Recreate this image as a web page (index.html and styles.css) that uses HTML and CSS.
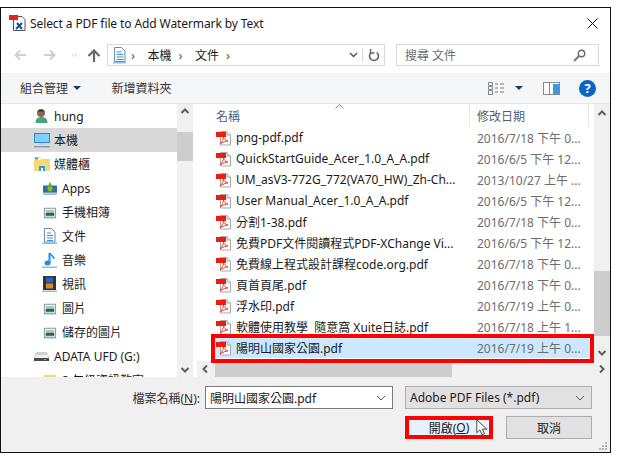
FILE: index.html
```html
<!DOCTYPE html>
<html lang="zh-Hant">
<head>
<meta charset="utf-8">
<title>Select a PDF file</title>
<link rel="stylesheet" href="styles.css">
</head>
<body>
<svg class="defs" width="0" height="0" aria-hidden="true">
  <symbol id="pdf" viewBox="0 0 16 16">
    <path d="M4.500 1.500h6.500l3.500 3.500v10h-10z" fill="#fff" stroke="#a8a8a8"/>
    <path d="M11 1.500v3.500h3.500" fill="#e8e8e8" stroke="#a8a8a8"/>
    <rect x="0" y="2" width="10" height="5" fill="#ee1c0e"/>
    <path d="M4 14c2-2 3.500-5 3.500-7 .5 2 2 3.500 4.500 4-2 0-5 1-8 3z" fill="none" stroke="#e8392c" stroke-width="1"/>
  </symbol>
  <symbol id="screen" viewBox="0 0 16 16">
    <path d="M1.500 15h14l-1-1.500h-12z" fill="#7cc4ee"/>
    <rect x="2.500" y="4" width="12" height="9.500" fill="#f4f8fb" stroke="#7f94a6"/>
    <rect x="4" y="6" width="9" height="6" fill="#9fc6a8"/>
    <rect x="4" y="9" width="9" height="3" fill="#3c5a4c"/>
  </symbol>
</svg>
<div class="window">
  <div class="titlebar">
    <svg class="title-icon" width="17" height="17" viewBox="0 0 17 17"><path d="M4.500 1.500h8.500l3 3v11H4.500z" fill="#fff" stroke="#555"/><rect x="0" y="0" width="9" height="5" fill="#e8201a"/><path d="M7 14l6-6M8 8l5 6" stroke="#1b4f9a" stroke-width="2"/></svg>
    <span class="title-text">Select a PDF file to Add Watermark by Text</span>
    <svg class="close" width="11" height="11" viewBox="0 0 11 11"><path d="M.500.500l10 10M10.500.500l-10 10" stroke="#111" fill="none"/></svg>
  </div>

  <div class="navrow">
    <svg class="nav-arrows" width="92" height="16" viewBox="0 0 92 16">
      <path d="M14 8H3.500M8 3.500L3.500 8 8 12.500" fill="none" stroke="#cfcfcf" stroke-width="2"/>
      <path d="M32 8h10.500M38 3.500L42.500 8 38 12.500" fill="none" stroke="#cfcfcf" stroke-width="2"/>
      <path d="M60 7l2.500 2.500L65 7" fill="none" stroke="#cfcfcf"/>
      <path d="M82 15V4M76.500 9L82 3.500 87.500 9" fill="none" stroke="#666" stroke-width="2.200"/>
    </svg>
    <div class="address">
      <svg class="addr-icon" width="13" height="17" viewBox="0 0 13 17"><path d="M1.500.500h7l3.500 3.500v10.500H1.500z" fill="#fff" stroke="#6f8aa3"/><path d="M3.500 5h5M3.500 7.500h7M3.500 10h7M3.500 12.500h7" stroke="#3d8fd8"/><path d="M0 15h13v1.500H0z" fill="#7cc4ee"/></svg>
      <span class="chev">›</span>
      <span class="crumb">本機</span>
      <span class="chev">›</span>
      <span class="crumb">文件</span>
      <span class="chev">›</span>
      <svg class="addr-drop" width="9" height="6" viewBox="0 0 9 6"><path d="M1 1l3.500 3.500L8 1" fill="none" stroke="#555" stroke-width="1.500"/></svg>
      <svg class="refresh" width="12" height="14" viewBox="0 0 12 14"><path d="M3.300 4.300a4.500 4.500 0 1 0 5.400 0" fill="none" stroke="#666" stroke-width="1.600"/><path d="M2.500 1v4h4" fill="none" stroke="#666" stroke-width="1.400"/></svg>
    </div>
    <div class="search">
      <span class="search-text">搜尋 文件</span>
      <svg width="13" height="13" viewBox="0 0 13 13"><circle cx="8.500" cy="4.500" r="3.200" fill="none" stroke="#666" stroke-width="1.400"/><path d="M6 7l-5 5" stroke="#777" stroke-width="2"/></svg>
    </div>
  </div>

  <div class="toolbar">
    <span class="tool-org">組合管理</span>
    <span class="caret"></span>
    <span class="tool-new">新增資料夾</span>
    <svg class="view-icon" width="17" height="13" viewBox="0 0 17 13"><path d="M.500.500h4v3h-4zM.500 4.500h4v3h-4zM.500 8.500h4v4h-4z" fill="none" stroke="#888"/><path d="M7 2h3M12 2h4M7 6h3M12 6h4M7 10h3M12 10h4" stroke="#777"/></svg>
    <span class="caret caret-view"></span>
    <svg class="pane-icon" width="17" height="13" viewBox="0 0 17 13"><rect x=".5" y=".5" width="16" height="12" fill="#fff" stroke="#8a8a8a"/><rect x="6" y="1" width="1" height="11" fill="#8a8a8a"/><rect x="10" y="2" width="6" height="10" fill="#3e96e0"/></svg>
    <span class="help">?</span>
  </div>

  <div class="panes">
    <div class="nav-pane">
      <div class="tree">
        <div class="node">
          <svg class="ti" width="14" height="16" viewBox="0 0 14 16"><path d="M1 15c0-4 2-6 6-6s6 2 6 6z" fill="#4aa27c"/><circle cx="6.500" cy="5" r="4" fill="#8a6a52"/><path d="M3 3.500a4 3.500 0 0 1 7 0z" fill="#2f2a28"/></svg>
          <span>hung</span>
        </div>
        <div class="node node-sel">
          <svg class="ti-pc" width="16" height="16" viewBox="0 0 16 16"><rect x="0" y="1" width="16" height="10" fill="#2f86c9"/><rect x="1" y="2" width="14" height="8" fill="#7fd0fa"/><rect x="5" y="11" width="6" height="2" fill="#c6ced6"/><rect x="0" y="14" width="16" height="1.500" fill="#8c9aa8"/></svg>
          <span>本機</span>
        </div>
        <div class="node">
          <svg class="ti-pc" width="16" height="14" viewBox="0 0 16 14"><path d="M0 0h6l2 2h8v12H0z" fill="#f8d777"/><path d="M0 1h7v2H0z" fill="#fff3c8"/><path d="M1 .5h3v2H1z" fill="#3e9be0"/><path d="M5 14V9h6v5" fill="#2e9be8"/><path d="M7 14v-3h2v3z" fill="#fff"/></svg>
          <span>媒體櫃</span>
        </div>
        <div class="node sub">
          <svg class="ti" width="15" height="15" viewBox="0 0 15 15"><rect x="1" y="5" width="14" height="9" rx="1" fill="#2d6f9e"/><rect x="1" y="12" width="14" height="2" fill="#b8c8d4"/><path d="M5 8l3-7 3 7z" fill="#6eaa2c"/><circle cx="8" cy="8.500" r="2.500" fill="#88b83a"/></svg>
          <span>Apps</span>
        </div>
        <div class="node sub">
          <svg class="ti"><use href="#screen"/></svg>
          <span>手機相簿</span>
        </div>
        <div class="node sub">
          <svg class="ti" width="15" height="16" viewBox="0 0 15 16"><path d="M2.500.5h7l3.500 3.500v10h-10.500z" fill="#fff" stroke="#6f8aa3"/><path d="M5 5h4M5 7.500h6M5 10h6M5 12.500h6" stroke="#3d8fd8"/><path d="M0 14.500h15v1.500H0z" fill="#7cc4ee"/></svg>
          <span>文件</span>
        </div>
        <div class="node sub">
          <svg class="ti" width="15" height="16" viewBox="0 0 15 16"><path d="M7.500 1v10" stroke="#1e8fe8" stroke-width="2"/><path d="M8 1c1 3 4 3 4 6" fill="none" stroke="#1e8fe8" stroke-width="1.500"/><ellipse cx="5.500" cy="11" rx="3" ry="2.500" fill="#1e8fe8"/><path d="M0 14.500h15v1.500H0z" fill="#7cc4ee"/></svg>
          <span>音樂</span>
        </div>
        <div class="node sub">
          <svg class="ti" width="15" height="16" viewBox="0 0 15 16"><rect x="1" y="0" width="13" height="14" fill="#333"/><rect x="4" y="1.500" width="7" height="5" fill="#2d62c4"/><rect x="4" y="7.500" width="7" height="5" fill="#d88a1c"/><path d="M0 14.500h15v1.500H0z" fill="#7cc4ee"/></svg>
          <span>視訊</span>
        </div>
        <div class="node sub">
          <svg class="ti"><use href="#screen"/></svg>
          <span>圖片</span>
        </div>
        <div class="node sub">
          <svg class="ti"><use href="#screen"/></svg>
          <span>儲存的圖片</span>
        </div>
        <div class="node">
          <svg class="ti-pc" width="15" height="9" viewBox="0 0 15 9"><path d="M2 0h11l2 5v4H0V5z" fill="#cfcfcf"/><rect y="6" width="15" height="3" fill="#4a4a4a"/><rect x="1" y="3" width="13" height="3" fill="#eee"/><rect x="10" y="7" width="2" height="1" fill="#3bd84a"/></svg>
          <span>ADATA UFD (G:)</span>
        </div>
        <div class="node sub">
          <svg class="ti-folder" width="12" height="10" viewBox="0 0 12 10"><rect width="12" height="10" fill="#f8d777"/></svg>
          <span>2 年級資訊教室</span>
        </div>
      </div>
      <div class="vscroll">
        <svg class="sb-btn" width="16" height="14" viewBox="0 0 16 14"><path d="M4.500 9L8 5.500 11.500 9" fill="none" stroke="#606060" stroke-width="2"/></svg>
        <div class="thumb thumb-nav"></div>
        <div class="sb-fill"></div>
        <svg class="sb-btn" width="16" height="14" viewBox="0 0 16 14"><path d="M4.500 5L8 8.500 11.500 5" fill="none" stroke="#606060" stroke-width="2"/></svg>
      </div>
    </div>

    <div class="list-wrap">
      <div class="list-main">
        <div class="list">
          <div class="head">
            <span class="h-name">名稱</span>
            <span class="h-date">修改日期</span>
            <svg class="sort" width="9" height="5" viewBox="0 0 9 5"><path d="M.5 4.500l4-4 4 4" fill="none" stroke="#8a8a8a"/></svg>
          </div>
          <div class="row"><svg class="pdf"><use href="#pdf"/></svg><span class="name">png-pdf.pdf</span><span class="date">2016/7/18 下午 0...</span></div>
          <div class="row"><svg class="pdf"><use href="#pdf"/></svg><span class="name">QuickStartGuide_Acer_1.0_A_A.pdf</span><span class="date">2016/6/5 下午 12...</span></div>
          <div class="row"><svg class="pdf"><use href="#pdf"/></svg><span class="name">UM_asV3-772G_772(VA70_HW)_Zh-Ch...</span><span class="date">2013/10/27 上午 ...</span></div>
          <div class="row"><svg class="pdf"><use href="#pdf"/></svg><span class="name">User Manual_Acer_1.0_A_A.pdf</span><span class="date">2016/6/5 下午 12...</span></div>
          <div class="row"><svg class="pdf"><use href="#pdf"/></svg><span class="name">分割1-38.pdf</span><span class="date">2016/7/18 下午 0...</span></div>
          <div class="row"><svg class="pdf"><use href="#pdf"/></svg><span class="name">免費PDF文件閱讀程式PDF-XChange Vi...</span><span class="date">2016/6/5 下午 12...</span></div>
          <div class="row"><svg class="pdf"><use href="#pdf"/></svg><span class="name">免費線上程式設計課程code.org.pdf</span><span class="date">2016/7/18 下午 0...</span></div>
          <div class="row"><svg class="pdf"><use href="#pdf"/></svg><span class="name">頁首頁尾.pdf</span><span class="date">2016/7/18 下午 0...</span></div>
          <div class="row"><svg class="pdf"><use href="#pdf"/></svg><span class="name">浮水印.pdf</span><span class="date">2016/7/19 上午 0...</span></div>
          <div class="row"><svg class="pdf"><use href="#pdf"/></svg><span class="name">軟體使用教學  隨意窩 Xuite日誌.pdf</span><span class="date">2016/7/18 上午 1...</span></div>
          <div class="row row-sel"><svg class="pdf"><use href="#pdf"/></svg><span class="name">陽明山國家公園.pdf</span><span class="date">2016/7/19 上午 0...</span></div>
        </div>
        <div class="vscroll vscroll-list">
          <svg class="sb-btn" width="16" height="18" viewBox="0 0 16 18"><path d="M4.500 11L8 7.500 11.500 11" fill="none" stroke="#606060" stroke-width="2"/></svg>
          <div class="sb-fill"></div>
          <div class="thumb thumb-list"></div>
          <svg class="sb-btn" width="16" height="17" viewBox="0 0 16 17"><path d="M4.500 7L8 10.500 11.500 7" fill="none" stroke="#606060" stroke-width="2"/></svg>
        </div>
      </div>
      <div class="hscroll">
        <svg class="sb-btn" width="18" height="16" viewBox="0 0 18 16"><path d="M10 4.500L6.500 8l3.500 3.500" fill="none" stroke="#606060" stroke-width="2"/></svg>
        <div class="hthumb"></div>
        <div class="sb-fill"></div>
        <svg class="sb-btn" width="18" height="16" viewBox="0 0 18 16"><path d="M8 4.500L11.500 8 8 11.500" fill="none" stroke="#606060" stroke-width="2"/></svg>
      </div>
    </div>
  </div>

  <div class="footer">
    <div class="foot-row">
      <span class="foot-label">檔案名稱(<u>N</u>):</span>
      <div class="combo">
        <span>陽明山國家公園.pdf</span>
        <svg width="10" height="6" viewBox="0 0 10 6"><path d="M1 1l4 4 4-4" fill="none" stroke="#555"/></svg>
      </div>
      <div class="filter">
        <span>Adobe PDF Files (*.pdf)</span>
        <svg width="10" height="6" viewBox="0 0 10 6"><path d="M1 1l4 4 4-4" fill="none" stroke="#555"/></svg>
      </div>
    </div>
    <div class="btn-row">
      <div class="btn btn-open">開啟(<u>O</u>)</div>
      <div class="btn">取消</div>
    </div>
    <svg class="grip" width="9" height="9" viewBox="0 0 9 9"><path d="M6 0h2v2H6zM3 3h2v2H3zM6 3h2v2H6zM0 6h2v2H0zM3 6h2v2H3zM6 6h2v2H6z" fill="#b4b4b4"/></svg>
  </div>

  <div class="mark mark-row"></div>
  <div class="mark mark-btn"></div>
  <svg class="cursor" width="12" height="17" viewBox="0 0 15 21"><path d="M1 1v16l4-3.500 2.500 6 3-1.300-2.500-5.700h5.500z" fill="#fff" stroke="#222" stroke-linejoin="round"/></svg>
</div>
</body>
</html>
```

FILE: styles.css
```css
* { box-sizing: border-box; }
html, body { margin: 0; padding: 0; background: #fff; }
body {
  width: 617px;
  height: 457px;
  padding-top: 7px;
  overflow: hidden;
  font-family: "Noto Sans", "Noto Sans CJK TC", sans-serif;
  font-size: 12px;
  color: #1a1a1a;
}
.defs { position: absolute; }
u { text-decoration: underline; }

.window {
  position: relative;
  width: 611px;
  height: 446px;
  border: 1px solid #111;
  background: #fff;
  display: flex;
  flex-direction: column;
  overflow: hidden;
}

.titlebar {
  height: 30px;
  flex: none;
  display: flex;
  align-items: center;
  padding: 0 12px 0 8px;
}
.title-icon { margin-right: 4px; }
.title-text { flex: 1; font-size: 12px; letter-spacing: -0.1px; }

.navrow {
  height: 35px;
  flex: none;
  display: flex;
  align-items: center;
  padding-bottom: 1px;
}
.nav-arrows { margin: 0 3px 0 11px; }
.address {
  width: 278px;
  height: 22px;
  border: 1px solid #d9d9d9;
  display: flex;
  align-items: center;
  padding-left: 5px;
}
.addr-icon { margin-right: 2px; }
.chev { width: 10px; text-align: center; color: #555; font-size: 13px; line-height: 1; }
.crumb { margin: 0 4px 0 9.5px; font-size: 12px; }
.addr-drop { margin-left: auto; margin-right: 4px; }
.refresh {
  box-sizing: content-box;
  padding: 0 4px 0 5px;
  border-left: 1px solid #d9d9d9;
  height: 14px;
}
.search {
  width: 203px;
  height: 22px;
  margin-left: 11px;
  border: 1px solid #d9d9d9;
  display: flex;
  align-items: center;
  justify-content: space-between;
  padding: 0 12px 0 8px;
  color: #6d6d6d;
}

.toolbar {
  height: 31px;
  flex: none;
  background: #f5f6f7;
  border-bottom: 1px solid #e6e7e8;
  display: flex;
  align-items: center;
  padding-left: 19px;
  color: #333;
}
.caret {
  width: 0; height: 0;
  margin-left: 5px;
  border-left: 4px solid transparent;
  border-right: 4px solid transparent;
  border-top: 4px solid #1c3a5e;
}
.tool-new { margin-left: 30.5px; }
.view-icon { margin-left: auto; }
.caret-view { margin-left: 10px; }
.pane-icon { margin-left: 20px; }
.help {
  width: 17px; height: 17px;
  margin: 0 14px 0 19px;
  border-radius: 50%;
  background: #0a66c2;
  color: #fff;
  font-weight: 700;
  font-size: 13px;
  line-height: 17px;
  text-align: center;
}

.panes { flex: 1; min-height: 0; display: flex; }
.nav-pane { width: 192px; flex: none; display: flex; }
.tree { flex: 1; overflow: hidden; }
.node {
  height: 24px;
  display: flex;
  align-items: center;
  padding-left: 53px;
  position: relative;
  font-size: 12px;
}
.node-sel { background: #d9d9d9; }
.node.sub { padding-left: 61px; }
.ti, .ti-pc, .ti-folder { position: absolute; }
.ti { left: 41px; width: 15px; height: 16px; }
.node:first-child .ti { left: 33px; }
.ti-pc { left: 33px; }
.ti-folder { left: 43px; }

.vscroll {
  width: 16px;
  flex: none;
  background: #f0f0f0;
  display: flex;
  flex-direction: column;
}
.sb-btn { flex: none; display: block; }
.sb-fill { flex: 1; }
.thumb { background: #cdcdcd; flex: none; }
.thumb-nav { height: 29px; margin-top: 14px; }
.thumb-list { height: 65px; }
.vscroll-list .thumb-list { margin-bottom: 8px; }

.list-wrap {
  flex: 1;
  min-width: 0;
  margin-left: 4px;
  display: flex;
  flex-direction: column;
}
.list-main { flex: 1; min-height: 0; display: flex; }
.list { flex: 1; min-width: 0; overflow: hidden; padding-left: 16px; }
.head {
  position: relative;
  height: 23px;
  display: flex;
  align-items: center;
  color: #4c607a;
}
.h-name { width: 256px; padding-left: 3px; }
.h-date {
  width: 120px;
  height: 100%;
  display: flex;
  align-items: center;
  padding-left: 7px;
  border-left: 1px solid #e5e5e5;
  border-right: 1px solid #e5e5e5;
}
.sort { position: absolute; left: 122px; top: 0; }
.row {
  height: 21px;
  display: flex;
  align-items: center;
  white-space: pre;
}
.row-sel { background: #cce8ff; }
.pdf { width: 16px; height: 16px; margin-left: 3px; flex: none; }
.name { width: 241px; margin-left: 4px; flex: none; overflow: hidden; }
.date { color: #6d6d6d; }

.hscroll {
  height: 16px;
  flex: none;
  background: #f0f0f0;
  display: flex;
  align-items: stretch;
}
.hthumb { width: 237px; background: #cdcdcd; flex: none; }

.footer {
  position: relative;
  height: 75px;
  flex: none;
  background: #f0f0f0;
  padding-top: 9px;
}
.foot-row { display: flex; align-items: center; height: 23px; }
.foot-label { width: 199px; text-align: right; color: #333; }
.combo, .filter {
  height: 23px;
  display: flex;
  align-items: center;
  justify-content: space-between;
  padding: 0 6px 0 4px;
}
.combo { width: 188px; margin-left: 5px; background: #fff; border: 1px solid #7a7a7a; }
.filter { width: 187px; margin-left: 12px; background: #e1e1e1; border: 1px solid #adadad; }
.btn-row { display: flex; gap: 14px; margin-top: 7px; padding-left: 405px; }
.btn {
  width: 86px;
  height: 23px;
  background: #e1e1e1;
  border: 1px solid #adadad;
  display: flex;
  align-items: center;
  justify-content: center;
}
.btn-open { background: #e5f1fb; border-color: #0078d7; }
.grip { position: absolute; right: 2px; bottom: 1px; }

.mark { position: absolute; border: 4px solid #f00; }
.mark-row { left: 210px; top: 326px; width: 383px; height: 29px; }
.mark-btn { left: 404px; top: 408px; width: 88px; height: 23px; }
.cursor { position: absolute; left: 475px; top: 411px; }
```
